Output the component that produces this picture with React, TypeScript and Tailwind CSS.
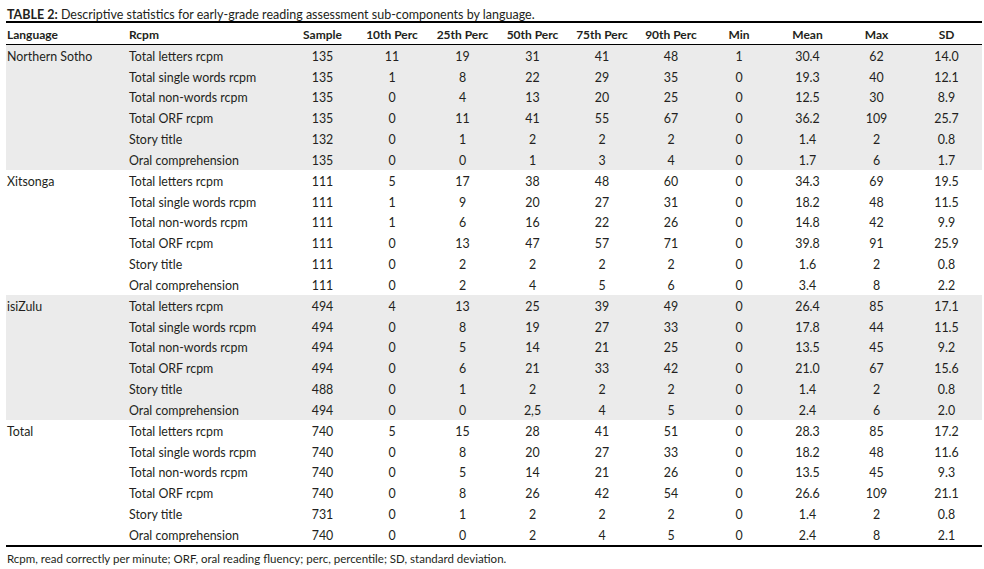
const cols =
  "grid grid-cols-[122px_160px_69px_70px_71px_69px_70px_68px_68px_69px_69px_71px] items-center";

const headers = [
  "Sample",
  "10th Perc",
  "25th Perc",
  "50th Perc",
  "75th Perc",
  "90th Perc",
  "Min",
  "Mean",
  "Max",
  "SD",
];

type Row = [string, ...string[]];

const groups: { language: string; shaded: boolean; rows: Row[] }[] = [
  {
    language: "Northern Sotho",
    shaded: true,
    rows: [
      ["Total letters rcpm", "135", "11", "19", "31", "41", "48", "1", "30.4", "62", "14.0"],
      ["Total single words rcpm", "135", "1", "8", "22", "29", "35", "0", "19.3", "40", "12.1"],
      ["Total non-words rcpm", "135", "0", "4", "13", "20", "25", "0", "12.5", "30", "8.9"],
      ["Total ORF rcpm", "135", "0", "11", "41", "55", "67", "0", "36.2", "109", "25.7"],
      ["Story title", "132", "0", "1", "2", "2", "2", "0", "1.4", "2", "0.8"],
      ["Oral comprehension", "135", "0", "0", "1", "3", "4", "0", "1.7", "6", "1.7"],
    ],
  },
  {
    language: "Xitsonga",
    shaded: false,
    rows: [
      ["Total letters rcpm", "111", "5", "17", "38", "48", "60", "0", "34.3", "69", "19.5"],
      ["Total single words rcpm", "111", "1", "9", "20", "27", "31", "0", "18.2", "48", "11.5"],
      ["Total non-words rcpm", "111", "1", "6", "16", "22", "26", "0", "14.8", "42", "9.9"],
      ["Total ORF rcpm", "111", "0", "13", "47", "57", "71", "0", "39.8", "91", "25.9"],
      ["Story title", "111", "0", "2", "2", "2", "2", "0", "1.6", "2", "0.8"],
      ["Oral comprehension", "111", "0", "2", "4", "5", "6", "0", "3.4", "8", "2.2"],
    ],
  },
  {
    language: "isiZulu",
    shaded: true,
    rows: [
      ["Total letters rcpm", "494", "4", "13", "25", "39", "49", "0", "26.4", "85", "17.1"],
      ["Total single words rcpm", "494", "0", "8", "19", "27", "33", "0", "17.8", "44", "11.5"],
      ["Total non-words rcpm", "494", "0", "5", "14", "21", "25", "0", "13.5", "45", "9.2"],
      ["Total ORF rcpm", "494", "0", "6", "21", "33", "42", "0", "21.0", "67", "15.6"],
      ["Story title", "488", "0", "1", "2", "2", "2", "0", "1.4", "2", "0.8"],
      ["Oral comprehension", "494", "0", "0", "2,5", "4", "5", "0", "2.4", "6", "2.0"],
    ],
  },
  {
    language: "Total",
    shaded: false,
    rows: [
      ["Total letters rcpm", "740", "5", "15", "28", "41", "51", "0", "28.3", "85", "17.2"],
      ["Total single words rcpm", "740", "0", "8", "20", "27", "33", "0", "18.2", "48", "11.6"],
      ["Total non-words rcpm", "740", "0", "5", "14", "21", "26", "0", "13.5", "45", "9.3"],
      ["Total ORF rcpm", "740", "0", "8", "26", "42", "54", "0", "26.6", "109", "21.1"],
      ["Story title", "731", "0", "1", "2", "2", "2", "0", "1.4", "2", "0.8"],
      ["Oral comprehension", "740", "0", "0", "2", "4", "5", "0", "2.4", "8", "2.1"],
    ],
  },
];

export default function App() {
  return (
    <div className="w-[984px] h-[569px] bg-white text-[#231f20] font-['Lato',sans-serif] text-[12.4px] leading-none">
      <div className="h-[21px] pt-[9px] pl-[7px] text-[12.5px]">
        <span className="font-bold">TABLE 2:</span> Descriptive statistics for early-grade reading
        assessment sub-components by language.
      </div>

      <div className="ml-[6px] w-[976px] border-t-2 border-b-2 border-black">
        <div className={`${cols} h-[22px] pt-[2px] border-b border-black font-bold text-[12px]`}>
          <div className="pl-[1px]">Language</div>
          <div className="pl-[1px]">Rcpm</div>
          {headers.map((h) => (
            <div key={h} className="text-center">
              {h}
            </div>
          ))}
        </div>

        {groups.map((g) => (
          <div
            key={g.language}
            className={`h-[125px] flex flex-col ${g.shaded ? "bg-[#ebebeb]" : ""}`}
          >
            {g.rows.map((r, i) => (
              <div key={r[0]} className={`${cols} flex-1 pt-[3px]`}>
                <div className="pl-[1px]">{i === 0 ? g.language : ""}</div>
                <div className="pl-[1px]">{r[0]}</div>
                {r.slice(1).map((v, j) => (
                  <div key={j} className="text-center">
                    {v}
                  </div>
                ))}
              </div>
            ))}
          </div>
        ))}
      </div>

      <div className="pt-[6px] pl-[7px] text-[11.5px]">
        Rcpm, read correctly per minute; ORF, oral reading fluency; perc, percentile; SD, standard
        deviation.
      </div>
    </div>
  );
}
